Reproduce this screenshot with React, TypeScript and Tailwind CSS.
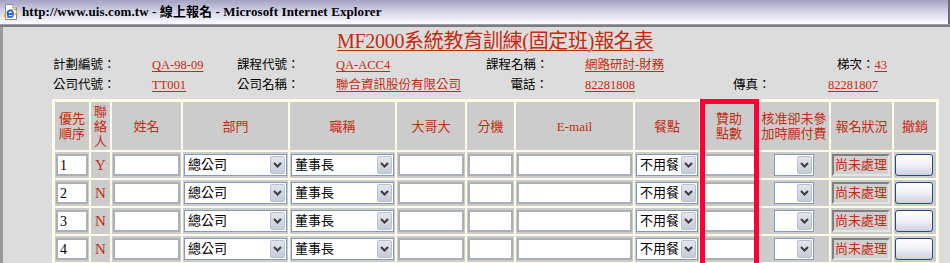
import React from "react";

const serif = { fontFamily: "'Liberation Serif', 'Noto Sans CJK TC', serif" };

function IEIcon() {
  return (
    <svg width="16" height="16" viewBox="0 0 16 16">
      <path d="M2.5 0.5 H10 L13.5 4 V15.5 H2.5 Z" fill="#fff" stroke="#8a8a8a" />
      <path d="M10 0.5 V4 H13.5" fill="#e8e8e8" stroke="#8a8a8a" />
      <ellipse cx="7.5" cy="9.5" rx="6.5" ry="3" fill="none" stroke="#f0b020" strokeWidth="1.3" transform="rotate(-25 7.5 9.5)" />
      <path d="M4.5 10 H10 C10 7.5 8.8 6.3 7.3 6.3 C5.6 6.3 4.5 7.8 4.5 9.8 C4.5 12 5.8 13.2 7.4 13.2 C8.6 13.2 9.5 12.6 9.9 11.6" fill="none" stroke="#1c6fd0" strokeWidth="1.8" />
    </svg>
  );
}

function Chevron() {
  return (
    <svg width="9" height="6" viewBox="0 0 9 6">
      <path d="M1 1 L4.5 4.5 L8 1" fill="none" stroke="#3c3c3c" strokeWidth="2" />
    </svg>
  );
}

function Select({ text, className = "" }: { text: string; className?: string }) {
  return (
    <div className={`flex h-[22px] items-stretch border border-[#7f9db9] bg-white ${className}`}>
      <div className="flex flex-1 items-center overflow-hidden whitespace-nowrap pl-[3px] text-[13px] text-black">{text}</div>
      <div className="m-[1px] flex w-[15px] items-center justify-center rounded-[2px] border border-[#b8c0d4] bg-gradient-to-b from-[#e4e6ee] to-[#c6cad8]">
        <Chevron />
      </div>
    </div>
  );
}

function TextBox({ text = "", className = "" }: { text?: string; className?: string }) {
  return (
    <div className={`flex h-[22px] items-center border-2 border-[#abafb6] bg-white pl-[2px] text-[14px] text-black ${className}`}>
      {text}
    </div>
  );
}

function Head({ children }: { children: React.ReactNode }) {
  return (
    <div className="flex items-center justify-center bg-[#cccccc] text-center text-[13px] leading-[15px] text-[#c42a10]">
      {children}
    </div>
  );
}

function Cell({ children, className = "" }: { children?: React.ReactNode; className?: string }) {
  return <div className={`flex items-center bg-[#cccccc] px-[1px] ${className}`}>{children}</div>;
}

const rows = [
  { n: "1", c: "Y" },
  { n: "2", c: "N" },
  { n: "3", c: "N" },
  { n: "4", c: "N" },
];

const val = "whitespace-nowrap text-[#c42a10] underline underline-offset-2";

export default function App() {
  return (
    <div className="relative h-[263px] w-[950px] overflow-hidden bg-[#dcdcdc]" style={serif}>
      {/* title bar */}
      <div className="flex h-[24px] items-center border-r-2 border-[#6a6a80] bg-gradient-to-b from-[#a2a2c2] via-[#d6d6e8] to-[#fbfbff] pl-[3px]">
        <IEIcon />
        <span className="ml-[3px] whitespace-nowrap text-[13px] font-bold tracking-[0.1px] text-black">
          http://www.uis.com.tw - 線上報名 - Microsoft Internet Explorer
        </span>
      </div>
      <div className="h-[1px] bg-[#9c9cae]" />
      <div className="h-[2px] bg-[#7c7c7c]" />
      <div className="h-[236px] border-l-[3px] border-[#9a9a9a]">
        {/* heading */}
        <div className="flex h-[28px] items-center pl-[334px]">
          <span className="whitespace-nowrap text-[20px] leading-[24px] tracking-[-0.3px] text-[#c42a10] underline decoration-1 underline-offset-2">
            MF2000系統教育訓練(固定班)報名表
          </span>
        </div>
        {/* info rows */}
        <div className="flex h-[20px] items-center whitespace-nowrap pl-[50px] text-[12.5px] text-black">
          <div className="w-[99px]">計劃編號：</div>
          <div className={`w-[85px] ${val}`}>QA-98-09</div>
          <div className="w-[99px]">課程代號：</div>
          <div className={`w-[150px] ${val}`}>QA-ACC4</div>
          <div className="w-[99px] pr-[37px] text-right">課程名稱：</div>
          <div className="w-[252px]"><span className={val}>網路研討-財務</span></div>
          <div>梯次：</div>
          <div className={val}>43</div>
        </div>
        <div className="flex h-[20px] items-center whitespace-nowrap pl-[50px] text-[12.5px] text-black">
          <div className="w-[99px]">公司代號：</div>
          <div className={`w-[85px] ${val}`}>TT001</div>
          <div className="w-[99px]">公司名稱：</div>
          <div className={`w-[150px] ${val}`}>聯合資訊股份有限公司</div>
          <div className="w-[99px] pr-[37px] text-right">電話：</div>
          <div className="w-[148px]"><span className={val}>82281808</span></div>
          <div className="w-[95px]">傳真：</div>
          <div className={val}>82281807</div>
        </div>
        {/* table */}
        <div className="ml-[49px] mt-[4px] grid w-[887px] grid-cols-[34px_19px_69px_105px_105px_68px_47px_117px_64px_56px_70px_61px_42px] grid-rows-[48px_26px_26px_26px_26px] gap-[2px] bg-[#fdfae6] p-[3px]">
          <Head>優先<br />順序</Head>
          <Head>聯<br />絡<br />人</Head>
          <Head>姓名</Head>
          <Head>部門</Head>
          <Head>職稱</Head>
          <Head>大哥大</Head>
          <Head>分機</Head>
          <Head>E-mail</Head>
          <Head>餐點</Head>
          <Head>贊助<br />點數</Head>
          <Head>核准卻未參<br />加時願付費</Head>
          <Head>報名狀況</Head>
          <Head>撤銷</Head>
          {rows.map((r) => (
            <React.Fragment key={r.n}>
              <Cell><TextBox text={r.n} className="w-full" /></Cell>
              <Cell className="justify-center text-[15px] text-[#c42a10]">{r.c}</Cell>
              <Cell><TextBox className="w-full" /></Cell>
              <Cell><Select text="總公司" className="w-full" /></Cell>
              <Cell><Select text="董事長" className="w-full" /></Cell>
              <Cell><TextBox className="w-full" /></Cell>
              <Cell><TextBox className="w-full" /></Cell>
              <Cell><TextBox className="w-full" /></Cell>
              <Cell><Select text="不用餐" className="w-full" /></Cell>
              <Cell><TextBox className="w-full" /></Cell>
              <Cell className="justify-center"><Select text="" className="w-[40px]" /></Cell>
              <Cell>
                <div className="flex h-[22px] w-[58px] items-center whitespace-nowrap border-2 border-b-[#e4e4e4] border-l-[#808080] border-r-[#e4e4e4] border-t-[#808080] bg-[#d0d0d0] pl-[1px] text-[13px] text-[#c42a10]">
                  尚未處理
                </div>
              </Cell>
              <Cell>
                <div className="h-[22px] w-[38px] rounded-[3px] border border-[#1f4f80] bg-gradient-to-b from-[#ffffff] via-[#f0f0f6] to-[#cfd0e0]" />
              </Cell>
            </React.Fragment>
          ))}
        </div>
      </div>
      {/* highlight box */}
      <div className="absolute left-[700px] top-[99px] h-[200px] w-[59px] border-[5px] border-[#ff0036]" />
    </div>
  );
}
